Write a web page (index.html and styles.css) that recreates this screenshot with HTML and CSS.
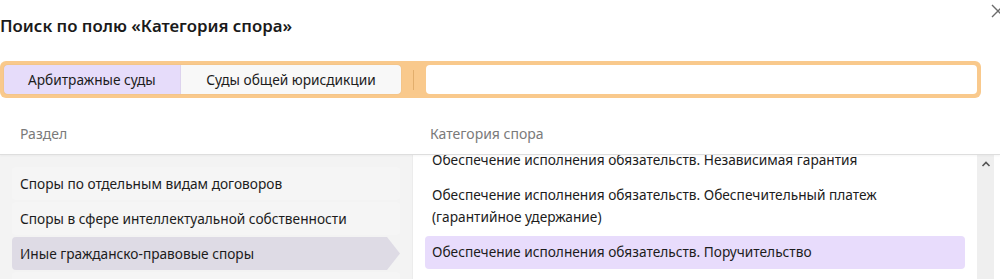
FILE: index.html
```html
<!DOCTYPE html>
<html lang="ru">
<head>
<meta charset="utf-8">
<title>Поиск по полю</title>
<link rel="stylesheet" href="styles.css">
</head>
<body>
<div class="dialog">
  <h1 class="title">Поиск по полю «Категория спора»</h1>
  <button class="close" aria-label="Закрыть">
    <svg width="16" height="16" viewBox="0 0 16 16"><path d="M2 2 L14 14 M14 2 L2 14" stroke="#6b6b6b" stroke-width="1.4" fill="none"/></svg>
  </button>
  <div class="searchbar">
    <div class="tabs">
      <div class="tab active">Арбитражные суды</div>
      <div class="tab">Суды общей юрисдикции</div>
    </div>
    <div class="sep"></div>
    <div class="input"></div>
  </div>
  <div class="heads">
    <div class="head left">Раздел</div>
    <div class="head right">Категория спора</div>
  </div>
  <div class="panels">
    <div class="sections">
      <div class="row">Споры по отдельным видам договоров</div>
      <div class="row">Споры в сфере интеллектуальной собственности</div>
      <div class="row selected">Иные гражданско-правовые споры</div>
      <div class="row"></div>
    </div>
    <div class="cats">
      <div class="scroll">
        <div class="list">
          <div class="item">Обеспечение исполнения обязательств. Независимая гарантия</div>
          <div class="item">Обеспечение исполнения обязательств. Обеспечительный платеж<br>(гарантийное удержание)</div>
          <div class="item selected">Обеспечение исполнения обязательств. Поручительство</div>
        </div>
      </div>
      <div class="scrollbar">
        <svg width="10" height="8" viewBox="0 0 10 8"><path d="M1.5 6 L5 2.5 L8.5 6" stroke="#555" stroke-width="1.6" fill="none"/></svg>
      </div>
    </div>
  </div>
</div>
</body>
</html>
```
FILE: styles.css
```css
html, body {
  margin: 0;
  padding: 0;
  background: #ffffff;
  overflow: hidden;
}
body {
  width: 1000px;
  height: 279px;
  font-family: "Noto Sans", "Open Sans", sans-serif;
  font-size: 13.7px;
  color: #1c1c1c;
}
.dialog {
  position: relative;
  height: 279px;
  display: flex;
  flex-direction: column;
}
.title {
  margin: 13px 0 0 0;
  font-size: 16.8px;
  line-height: 26px;
  font-weight: 600;
  color: #1a1a1a;
}
.close {
  position: absolute;
  top: 3px;
  left: 990px;
  width: 16px;
  height: 16px;
  padding: 0;
  border: 0;
  background: none;
}
.close svg { display: block; }
.searchbar {
  margin-top: 22px;
  width: 973px;
  padding: 4px;
  background: #f9c98c;
  border-radius: 6px;
  display: flex;
  align-items: center;
}
.tabs {
  display: flex;
  height: 29px;
  border-radius: 4px;
  overflow: hidden;
  box-shadow: 0 0 1px rgba(0,0,0,0.2);
}
.tab {
  display: flex;
  align-items: center;
  padding: 0 25.5px;
  background: #f8f8f8;
  line-height: 20px;
}
.tab.active {
  padding: 0 24px;
  background: #e6dcfa;
  border-right: 1px solid #ddd3ee;
}
.sep {
  width: 1px;
  height: 20px;
  background: #e2ae6c;
  margin: 0 12px;
}
.input {
  flex: 1;
  height: 29px;
  background: #ffffff;
  border-radius: 4px;
}
.heads {
  display: flex;
  margin-top: 26px;
  height: 30px;
  border-bottom: 1px solid #dedede;
  box-shadow: 0 1px 2px rgba(0,0,0,0.04);
  position: relative;
  z-index: 1;
  background: #fff;
}
.head {
  color: #7a7a7a;
  line-height: 20px;
  font-size: 14px;
}
.head.left { width: 412px; padding-left: 20px; box-sizing: border-box; }
.head.right { padding-left: 18px; }
.panels {
  flex: 1;
  display: flex;
  min-height: 0;
}
.sections {
  width: 412px;
  background: #f3f3f3;
  padding: 12px 12px 0 12px;
  box-sizing: border-box;
  display: flex;
  flex-direction: column;
  gap: 2px;
  overflow: hidden;
}
.row {
  flex: none;
  width: 388px;
  height: 33px;
  box-sizing: border-box;
  padding: 0 8px;
  display: flex;
  align-items: center;
  border-radius: 4px;
  background: #f5f5f5;
  line-height: 20px;
}
.row.selected {
  background: #dedbe5;
  clip-path: polygon(0 0, 375px 0, 388px 50%, 375px 100%, 0 100%);
}
.cats {
  flex: 1;
  display: flex;
  border-left: 1px solid #ececec;
  min-width: 0;
}
.scroll {
  flex: 1;
  overflow: hidden;
  padding: 0 12px 0 12px;
}
.list {
  margin-top: -11px;
  display: flex;
  flex-direction: column;
  gap: 2px;
}
.item {
  padding: 5px 7px 6px 7px;
  line-height: 22px;
  border-radius: 4px;
}
.item.selected {
  background: #e8dcfc;
}
.scrollbar {
  width: 17px;
  margin-right: 6px;
  background: #efefef;
  display: flex;
  justify-content: center;
  padding-top: 5px;
  box-sizing: border-box;
}
.scrollbar svg { display: block; }
```
